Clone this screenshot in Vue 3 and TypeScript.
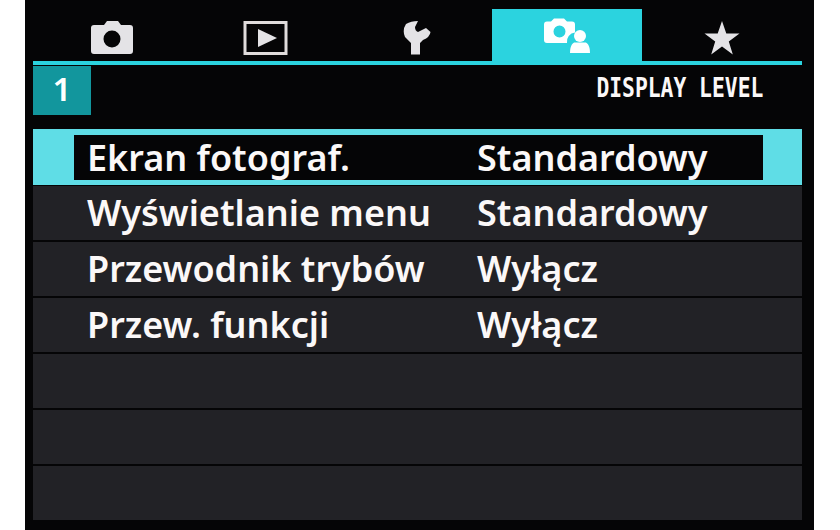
<script setup lang="ts">
const rows = [
  { label: 'Ekran fotograf.', value: 'Standardowy' },
  { label: 'Wyświetlanie menu', value: 'Standardowy' },
  { label: 'Przewodnik trybów', value: 'Wyłącz' },
  { label: 'Przew. funkcji', value: 'Wyłącz' },
  { label: '', value: '' },
  { label: '', value: '' },
  { label: '', value: '' },
]
</script>

<template>
  <div class="page">
    <div class="screen">
      <div class="tabs">
        <div class="tab">
          <svg width="46" height="36" viewBox="0 0 46 36">
            <path fill="#e4e3e6" fill-rule="evenodd" d="M15 5l3-4h11l3 4h9a3 3 0 0 1 3 3v23a3 3 0 0 1-3 3H5a3 3 0 0 1-3-3V8a3 3 0 0 1 3-3zM23 10.500a8.500 8.500 0 1 0 0 17a8.500 8.500 0 1 0 0-17z" />
          </svg>
        </div>
        <div class="tab">
          <svg class="play" width="46" height="36" viewBox="0 0 46 36">
            <rect x="2" y="2.500" width="41" height="31" fill="none" stroke="#e0dcdc" stroke-width="3" />
            <path fill="#e4e3e6" d="M15 9l19 9l-19 9z" />
          </svg>
        </div>
        <div class="tab">
          <svg class="wrench" width="28" height="34" viewBox="0 0 28 34">
            <path fill="#e4e3e6" d="M3 3Q8 0 15 0L12 6Q12 10 15 11L23 7L27.500 11Q27 16 20 19L17 22V33.500H8V22L2 16Q-1 9 3 3z" />
          </svg>
        </div>
        <div class="tab active">
          <svg width="46" height="36" viewBox="0 0 46 36">
            <path fill="#fff" fill-rule="evenodd" d="M7 3.500l3-3h10l3 3h5a3 3 0 0 1 3 3v8a9 9 0 0 0-8 10.500H3a3 3 0 0 1-3-3V6.500a3 3 0 0 1 3-3zM15.500 7.500a6 6 0 1 0 0 12a6 6 0 1 0 0-12z" />
            <circle cx="36" cy="18" r="6" fill="#fff" />
            <path fill="#fff" d="M26 35c0-8 3-10.500 5-10.500h10c2 0 5 2.500 5 10.500z" />
          </svg>
        </div>
        <div class="tab">
          <svg width="36" height="36" viewBox="0 0 36 36">
            <path fill="#e4e3e6" d="M18 1l4.300 12.500h13.200l-10.700 8l4 13l-10.800-8l-10.800 8l4-13l-10.700-8h13.200z" />
          </svg>
        </div>
      </div>
      <div class="subhead">
        <div class="page-num">1</div>
        <div class="level">DISPLAY LEVEL</div>
      </div>
      <div class="list">
        <div v-for="(row, i) in rows" :key="i" class="row" :class="{ selected: i === 0 }">
          <div class="row-inner">
            <span class="label">{{ row.label }}</span>
            <span class="value">{{ row.value }}</span>
          </div>
        </div>
      </div>
    </div>
  </div>
</template>

<style>
html, body {
  margin: 0;
  background: #fff;
}
</style>

<style scoped>
.page {
  width: 840px;
  height: 530px;
  padding-left: 25px;
  box-sizing: border-box;
  overflow: hidden;
  font-family: "Noto Sans", "Open Sans", sans-serif;
}

.screen {
  width: 789px;
  height: 530px;
  box-sizing: border-box;
  padding: 9px 12px 0 8px;
  background: #050506;
  color: #fbf8f8;
}

.tabs {
  display: grid;
  grid-template-columns: 157px 150px 152px 150px 160px;
  height: 56px;
  box-sizing: border-box;
  border-bottom: 4px solid #2bd3df;
}

.tab {
  display: flex;
  align-items: center;
  justify-content: center;
  padding-top: 1px;
  box-sizing: border-box;
}

.tab.active {
  height: 56px;
  background: #2bd3df;
  align-items: flex-start;
  padding-top: 9px;
}

.play {
  margin-left: 2px;
}

.wrench {
  margin-left: 2px;
}

.subhead {
  display: flex;
  justify-content: space-between;
  height: 64px;
}

.page-num {
  width: 58px;
  height: 49px;
  margin-top: 1px;
  background: #12969d;
  color: #fff;
  font-size: 33px;
  font-weight: 600;
  line-height: 46px;
  text-align: center;
}

.level {
  padding-top: 6px;
  margin-right: 39px;
  font-family: "DejaVu Sans Mono", monospace;
  font-size: 27px;
  line-height: 34px;
  font-weight: 700;
  white-space: nowrap;
  transform: scaleX(0.79);
  transform-origin: right center;
}

.list {
  display: flex;
  flex-direction: column;
  gap: 2px;
}

.row {
  height: 54px;
  background: #222226;
}

.row.selected {
  height: 56px;
  box-sizing: border-box;
  padding: 6px 39px 5px 41px;
  margin-bottom: -1px;
  background: #5fdde6;
}

.row-inner {
  display: flex;
  align-items: center;
  height: 100%;
  padding-left: 54px;
  box-sizing: border-box;
  font-size: 36px;
  font-weight: 600;
  line-height: 54px;
}

.selected .row-inner {
  padding-left: 13px;
  background: #050506;
}

.label {
  width: 390px;
  flex: none;
  white-space: nowrap;
}

.value {
  white-space: nowrap;
}
</style>
